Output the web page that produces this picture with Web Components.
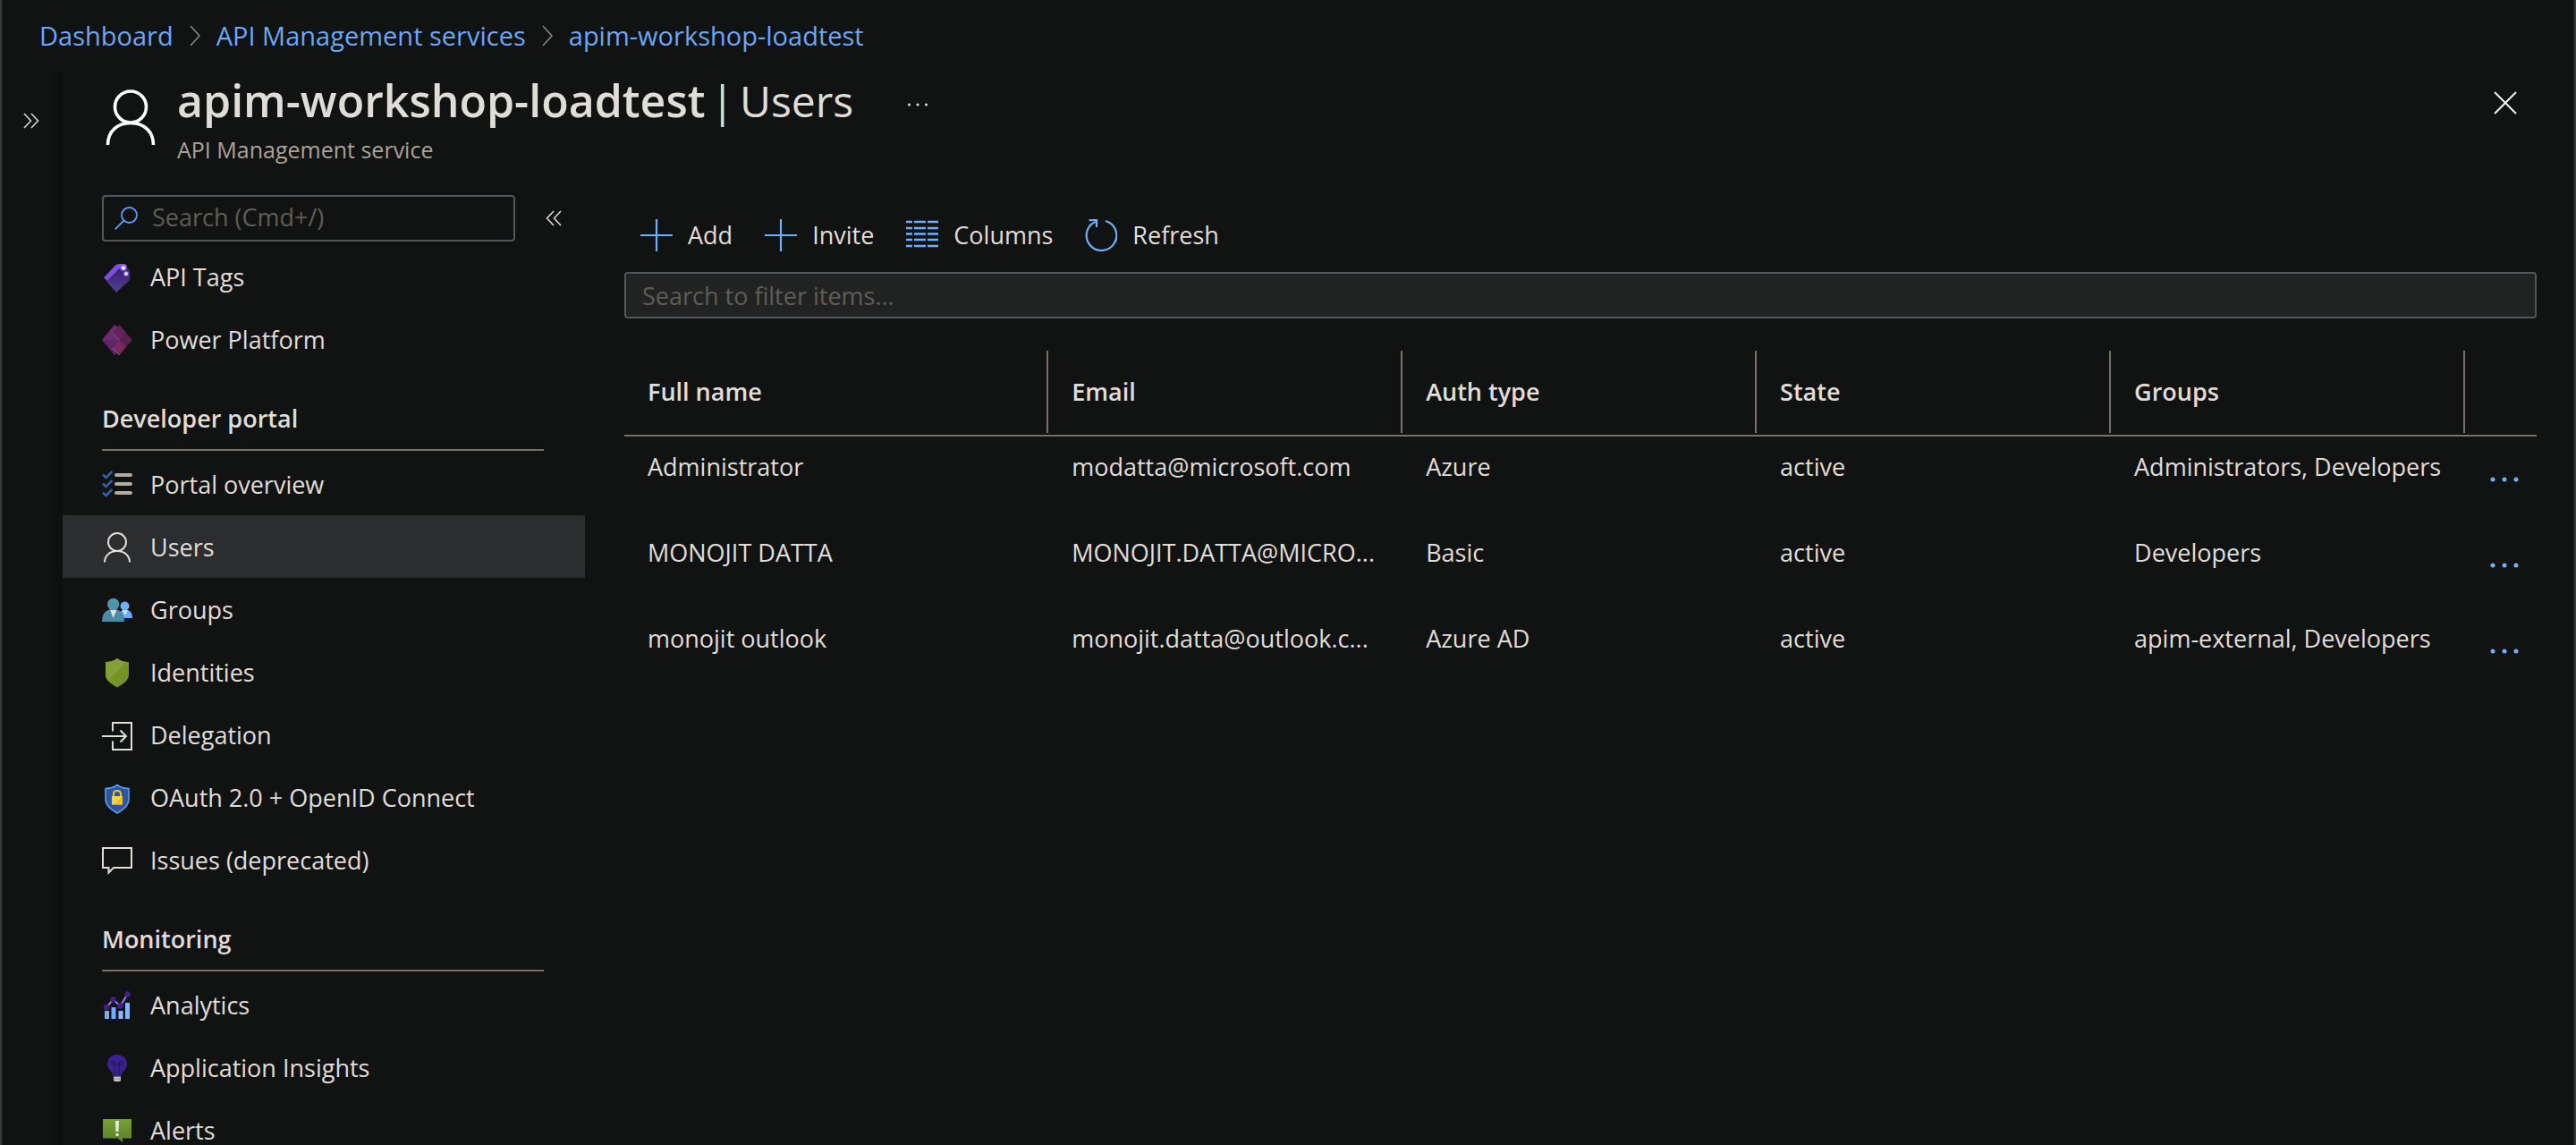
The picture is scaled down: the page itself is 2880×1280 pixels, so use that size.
<!DOCTYPE html>
<html lang="en">
<head>
<meta charset="utf-8">
<title>apim-workshop-loadtest | Users</title>
<style>
  html, body { margin: 0; height: 100%; background: #111312; }
  body {
    --text: #e0ddd9; --muted: #aaa298; --link: #6ba6f8; --accent: #6cb0ff;
    --rule: #7a7064; --field: #54565a; --hint: #605c57; --selected: #2c2d2e;
    font-family: "Open Sans", "Noto Sans", sans-serif;
    font-size: 27px; line-height: 36px; color: var(--text); overflow: hidden;
  }
</style>
</head>
<body>
<portal-shell>
  <bread-crumbs slot="trail"></bread-crumbs>
  <blade-header slot="header" icon="person" name="apim-workshop-loadtest" page="Users" kind="API Management service"></blade-header>
  <side-menu slot="menu">
    <menu-group>
      <menu-entry icon="tags">API Tags</menu-entry>
      <menu-entry icon="power">Power Platform</menu-entry>
    </menu-group>
    <menu-group label="Developer portal">
      <menu-entry icon="checklist">Portal overview</menu-entry>
      <menu-entry icon="person" selected>Users</menu-entry>
      <menu-entry icon="groups">Groups</menu-entry>
      <menu-entry icon="shield">Identities</menu-entry>
      <menu-entry icon="delegate">Delegation</menu-entry>
      <menu-entry icon="lock">OAuth 2.0 + OpenID Connect</menu-entry>
      <menu-entry icon="comment">Issues (deprecated)</menu-entry>
    </menu-group>
    <menu-group label="Monitoring">
      <menu-entry icon="chart">Analytics</menu-entry>
      <menu-entry icon="bulb">Application Insights</menu-entry>
      <menu-entry icon="alert">Alerts</menu-entry>
    </menu-group>
  </side-menu>
  <command-bar>
    <command-button icon="plus">Add</command-button>
    <command-button icon="plus">Invite</command-button>
    <command-button icon="columns">Columns</command-button>
    <command-button icon="refresh">Refresh</command-button>
  </command-bar>
  <filter-box></filter-box>
  <users-table></users-table>
</portal-shell>

<script>
const ICONS = {
  person: ['0 0 34 34', `<g fill="none" stroke="currentColor" stroke-width="2"><circle cx="17" cy="11" r="10"/><path d="M3 33.500C3 26 9 21 17 21S31 26 31 33.500"/></g>`],
  personLarge: ['0 0 56 62', `<g fill="none" stroke="currentColor" stroke-width="3.600"><circle cx="28" cy="19.500" r="17.500"/><path d="M2.500 62C2.500 47 13 37.500 28 37.500S53.500 47 53.500 62"/></g>`],
  tags: ['0 0 34 34', `<defs><linearGradient id="t" x1="0" y1="0" x2="0" y2="1"><stop offset="0" stop-color="#3b1f73"/><stop offset="1" stop-color="#553f97"/></linearGradient></defs><path d="M2 17.500 14.500 4Q16.500 2 19 2H25Q27.500 2 28 5V9L8 23Z" fill="#7b4fe0"/><path d="M5 21.500 18.500 8Q20 7 22 7H29Q31 8 31.500 11V17Q31.500 19 30 21L16 34Z" fill="url(#t)"/><circle cx="24" cy="6.500" r="3.600" fill="#8d6be6"/><circle cx="24" cy="6.500" r="2" fill="#fff"/><circle cx="27" cy="13" r="3" fill="#7659c0"/><circle cx="27" cy="13" r="1.900" fill="#eee6ff"/>`],
  power: ['0 0 34 36', `<path d="M14 1 0 18 14 35 16.500 33 29 18 16.500 3Z" fill="#6b2a72"/><path d="M14 35 0 18 29 18 16.500 33Z" fill="#56235f" opacity=".6"/><path d="M19.500 1 12 10 19 18 27 10Z" fill="#64245a"/><path d="M27 10 34 18 27 26 19 18Z" fill="#58204a"/><path d="M19 18 27 26 19.500 35 12 27Z" fill="#76295f"/><path d="M12 10 19 18" stroke="#8d5688" stroke-width="1"/><path d="M12 27 19.500 35" stroke="#9c6888" stroke-width="1"/>`],
  checklist: ['0 0 34 34', `<g fill="none" stroke="#355fad" stroke-width="2.500"><path d="M1 5.500 4.500 9 11.500 2"/><path d="M1 15.500 4.500 19 11.500 12"/><path d="M1 25.500 4.500 29 11.500 22"/></g><g stroke="#b3aba1" stroke-width="4" stroke-linecap="round"><path d="M16 6H32M16 16H32M16 26H32"/></g>`],
  groups: ['0 0 34 34', `<path d="M19 26C18.500 20 21 16.500 26 16.500S34 20 34 26Z" fill="#6aacfb"/><path d="M22.500 17H29L26 23Z" fill="#d6e4ee"/><circle cx="25.500" cy="12.500" r="5" fill="#6cb0ff"/><path d="M0 30C0 21 4 16 12.500 16S25 21 25 30Q25 30 23 30H2Q0 30 0 30Z" fill="#4c89a4"/><path d="M9 16.500H16.500L12.700 26Z" fill="#dfe3e4"/><circle cx="12.700" cy="10.500" r="6.700" fill="#5191ac"/>`],
  shield: ['0 0 34 34', `<path d="M17 1Q22 5 30 5V19C30 26 23 30 17 33.500 11 30 4 26 4 19V5Q12 5 17 1Z" fill="#749526"/><path d="M17 1Q22 5 27 5L7 26Q4 23 4 19V5Q12 5 17 1Z" fill="#82a037"/>`],
  delegate: ['0 0 34 34', `<g fill="none" stroke="currentColor" stroke-width="2"><path d="M12 12.500V3H33V33H12V23.500"/><path d="M0 18H27M20.500 11.500 27 18 20.500 24.500"/></g>`],
  lock: ['0 0 34 35', `<path d="M17 2.500Q22.500 6.500 30 6.500V18C30 26 23 30.500 17 34 11 30.500 4 26 4 18V6.500Q11.500 6.500 17 2.500Z" fill="#2f55a0" stroke="#5e9be8" stroke-width="1.600"/><path d="M13 16V12.500Q13 9 17 9T21 12.500V16" fill="none" stroke="#f0b93a" stroke-width="2"/><path d="M11 15H23V24.500H11Z" fill="#f7d33f"/><path d="M23 15V24.500H13Z" fill="#f0c033"/>`],
  comment: ['0 0 34 34', `<path d="M1 3H33V25H13L7.500 30.500V25H1Z" fill="none" stroke="currentColor" stroke-width="2"/>`],
  chart: ['0 0 34 34', `<path d="M3 23H8V32H3Z" fill="#7dadeb"/><path d="M10.500 19H15.500V32H10.500Z" fill="#6cb0ff"/><path d="M18.500 23H23.500V32H18.500Z" fill="#8abaf8"/><path d="M26 14H31V32H26Z" fill="#80b9fb"/><path d="M5 19 12.500 10.500 20.500 17.500 28.500 4.500" fill="none" stroke="#9a7ce6" stroke-width="2"/><g fill="#431d92"><circle cx="5" cy="19" r="3.200"/><circle cx="12.500" cy="10.500" r="3.200"/><circle cx="20.500" cy="17.500" r="3.200"/><circle cx="28.500" cy="4.500" r="3.200"/></g>`],
  bulb: ['0 0 34 34', `<path d="M17 2C23.500 2 28 6.500 28 13 28 18 22 21 21.500 26H12.500C12 21 6 18 6 13 6 6.500 10.500 2 17 2Z" fill="#3b2090"/><path d="M14.500 25V13H19.500V25M14.500 13C10 14 9 9.500 12 9.500S14.500 13 14.500 13M19.500 13C24 14 25 9.500 22 9.500S19.500 13 19.500 13" fill="none" stroke="#23184f" stroke-width="1.200"/><path d="M13 26.500H21V31L19.500 32H14.500L13 31Z" fill="#c9c4be"/><path d="M13 29H21" stroke="#97928c" stroke-width="1"/>`],
  alert: ['0 0 34 34', `<defs><linearGradient id="a" x1="0" y1="0" x2="0" y2="1"><stop offset="0" stop-color="#76a033"/><stop offset="1" stop-color="#5b7f2c"/></linearGradient></defs><path d="M1 4H33V25.500H23V30L17.500 25.500H1Z" fill="url(#a)"/><path d="M15 6H19L18.500 18H15.500Z" fill="#e8e8e2"/><path d="M15.500 20H18.500V23H15.500Z" fill="#e8e8e2"/>`],
  plus: ['0 0 36 36', `<path d="M18 0V36M0 18H36" stroke="currentColor" stroke-width="2.200"/>`],
  columns: ['0 0 36 36', `<path d="M0 3H36M0 10H36M0 16.500H36M0 23H36M0 30H36" stroke="currentColor" stroke-width="2.400" stroke-dasharray="7 2 13 2 12 0"/>`],
  refresh: ['0 0 36 36', `<g fill="none" stroke="currentColor" stroke-width="2.200"><path d="M23 2A16.800 16.800 0 1 1 12 2.700"/><path d="M4.500 1H13V9"/></g>`],
  search: ['0 0 26 26', `<g fill="none" stroke="currentColor" stroke-width="1.800"><circle cx="16.500" cy="9.500" r="8.500"/><path d="M10.500 15.500.700 25.300"/></g>`],
  close: ['0 0 26 26', `<path d="M1 1 25 25M25 1 1 25" stroke="currentColor" stroke-width="2"/>`],
  expand: ['0 0 18 18', `<path d="M1 1 8.500 9 1 17M9 1 16.500 9 9 17" fill="none" stroke="currentColor" stroke-width="1.500"/>`],
  collapse: ['0 0 18 18', `<path d="M9 1 1.500 9 9 17M17 1 9.500 9 17 17" fill="none" stroke="currentColor" stroke-width="1.500"/>`],
  chevron: ['0 0 12 24', `<path d="M1 1 11 12 1 23" fill="none" stroke="currentColor" stroke-width="1.400"/>`],
  dots: ['0 0 24 6', `<g fill="currentColor"><circle cx="2.500" cy="3" r="1.600"/><circle cx="12" cy="3" r="1.600"/><circle cx="21.500" cy="3" r="1.600"/></g>`],
  rowDots: ['0 0 32 6', `<g fill="currentColor"><circle cx="3" cy="3" r="2.500"/><circle cx="16" cy="3" r="2.500"/><circle cx="29" cy="3" r="2.500"/></g>`]
};

const RESET = `
  * { box-sizing: border-box; }
  button { font: inherit; color: inherit; background: none; border: 0; padding: 0; margin: 0; cursor: pointer; }
  a { color: inherit; text-decoration: none; }
  input { font: inherit; color: inherit; margin: 0; outline: 0; }
  input::placeholder { color: var(--hint); opacity: 1; }
`;

class BaseElement extends HTMLElement {
  connectedCallback() {
    if (this.shadowRoot) return;
    this.attachShadow({ mode: 'open' }).innerHTML = `<style>${RESET}${this.styles()}</style>${this.markup()}`;
  }
  styles() { return ':host{display:block}'; }
  markup() { return '<slot></slot>'; }
}

customElements.define('svg-icon', class extends BaseElement {
  styles() { return ':host{display:block;flex:none} svg{display:block}'; }
  markup() {
    const [box, art] = ICONS[this.getAttribute('name')];
    const [, , w, h] = box.split(' ');
    return `<svg viewBox="${box}" width="${w}" height="${h}" aria-hidden="true">${art}</svg>`;
  }
});

customElements.define('portal-shell', class extends BaseElement {
  styles() { return `
    :host { display: flex; flex-direction: column; height: 100vh; overflow: hidden;
      border-left: 2px solid #3a3b3b; border-right: 2px solid #3a3b3b; }
    .main { flex: 1; display: flex; min-height: 0; }
    .rail { flex: none; width: 68px; padding: 46px 0 0 24px;
      background: linear-gradient(90deg, transparent 50px, #0d0f0e 68px); }
    .rail button { display: block; }
    .blade { flex: 1; min-width: 0; display: flex; flex-direction: column; }
    .body { flex: 1; display: flex; min-height: 0; }
    .content { flex: 1; min-width: 0; padding: 24px 42px 0 44px; }
  `; }
  markup() { return `
    <slot name="trail"></slot>
    <div class="main">
      <div class="rail"><button aria-label="Expand"><svg-icon name="expand"></svg-icon></button></div>
      <section class="blade">
        <slot name="header"></slot>
        <div class="body"><slot name="menu"></slot><main class="content"><slot></slot></main></div>
      </section>
    </div>`; }
});

customElements.define('bread-crumbs', class extends BaseElement {
  styles() { return `
    :host { display: block; padding: 20px 42px; font-size: 29px; line-height: 40px; color: var(--link); }
    nav { display: flex; align-items: center; gap: 18px; }
    svg-icon { color: #8f8f8f; }
  `; }
  markup() { return `<nav aria-label="Breadcrumb">
    <a href="#">Dashboard</a><svg-icon name="chevron"></svg-icon>
    <a href="#">API Management services</a><svg-icon name="chevron"></svg-icon>
    <a href="#">apim-workshop-loadtest</a></nav>`; }
});

customElements.define('blade-header', class extends BaseElement {
  styles() { return `
    :host { display: flex; height: 138px; padding: 0 64px 0 48px; }
    .art { padding: 20px 24px 0 0; color: #fff; }
    h1 { display: flex; align-items: baseline; gap: 6px; margin: 0; font-size: 50px; line-height: 64px; font-weight: 600; }
    h1 span { font-size: 48px; font-weight: 400; }
    h1 button { align-self: center; padding: 8px 0 0 54px; }
    p { margin: 4px 0 0; font-size: 25px; color: var(--muted); }
    .close { margin: 22px 0 0 auto; align-self: flex-start; color: #f0f0f0; }
  `; }
  markup() {
    const a = n => this.getAttribute(n);
    return `<div class="art"><svg-icon name="${a('icon')}Large"></svg-icon></div>
      <div><h1>${a('name')} <span>|</span> <span>${a('page')}</span><button aria-label="More"><svg-icon name="dots"></svg-icon></button></h1><p>${a('kind')}</p></div>
      <button class="close" aria-label="Close"><svg-icon name="close"></svg-icon></button>`;
  }
});

customElements.define('side-menu', class extends BaseElement {
  styles() { return `
    :host { display: flex; flex-direction: column; flex: none; width: 584px; min-height: 0; }
    .find { display: flex; align-items: center; gap: 34px; padding-left: 44px; }
    label { display: flex; align-items: center; gap: 16px; width: 462px; height: 52px; padding: 0 12px;
      border: 2px solid var(--field); border-radius: 4px; color: #5a9cf5; }
    input { flex: 1; min-width: 0; border: 0; padding: 0 0 2px; background: none; }
    nav { flex: 1; min-height: 0; overflow: hidden; padding-top: 4px; }
  `; }
  markup() { return `
    <div class="find"><label><svg-icon name="search"></svg-icon><input type="text" aria-label="Search menu" placeholder="Search (Cmd+/)"></label>
      <button aria-label="Collapse"><svg-icon name="collapse"></svg-icon></button></div>
    <nav><slot></slot></nav>`; }
});

customElements.define('menu-group', class extends BaseElement {
  styles() { return `
    :host { display: block; }
    h2 { margin: 0 46px 2px 44px; padding: 36px 0 16px; border-bottom: 2px solid var(--rule);
      font-size: 27px; line-height: 36px; font-weight: 600; }
  `; }
  markup() {
    const label = this.getAttribute('label');
    return `${label ? `<h2>${label}</h2>` : ''}<slot></slot>`;
  }
});

customElements.define('menu-entry', class extends BaseElement {
  styles() { return `
    :host { display: block; }
    :host([selected]) { background: var(--selected); }
    a { display: flex; align-items: center; gap: 20px; height: 70px; padding: 2px 0 0 44px; line-height: 28px; white-space: nowrap; }
  `; }
  markup() { return `<a href="#"><svg-icon name="${this.getAttribute('icon')}"></svg-icon><slot></slot></a>`; }
});

customElements.define('command-bar', class extends BaseElement {
  styles() { return ':host { display: flex; gap: 36px; padding-left: 18px; margin-bottom: 20px; }'; }
});

customElements.define('command-button', class extends BaseElement {
  styles() { return `
    :host { display: block; }
    button { display: flex; align-items: center; gap: 17px; height: 42px; }
    svg-icon { color: var(--accent); }
  `; }
  markup() { return `<button><svg-icon name="${this.getAttribute('icon')}"></svg-icon><slot></slot></button>`; }
});

customElements.define('filter-box', class extends BaseElement {
  styles() { return `
    :host { display: block; margin-bottom: 36px; }
    input { display: block; width: 100%; height: 52px; padding: 0 18px; border: 2px solid var(--field); border-radius: 4px; background: #212322; }
  `; }
  markup() { return '<input type="text" aria-label="Filter items" placeholder="Search to filter items...">'; }
});

customElements.define('users-table', class extends BaseElement {
  styles() { return `
    :host { display: block; }
    table { width: 100%; table-layout: fixed; border-collapse: separate; border-spacing: 0; }
    th { padding: 0 0 2px; border-bottom: 2px solid var(--rule); text-align: left; font-weight: 600; }
    th.field { width: 18.52%; }
    th.name { width: auto; }
    th.more { width: 80px; }
    th div { display: flex; align-items: center; height: 92px; padding-left: 26px; border-right: 2px solid var(--rule); }
    td { height: 96px; padding: 16px 0 0 26px; vertical-align: top; white-space: nowrap; }
    td.more { padding: 0 0 0 8px; vertical-align: middle; color: var(--accent); }
    td button { display: block; margin: 0 auto; }
  `; }
  markup() {
    const rows = [
      ['Administrator', 'modatta@microsoft.com', 'Azure', 'active', 'Administrators, Developers'],
      ['MONOJIT DATTA', 'MONOJIT.DATTA@MICRO...', 'Basic', 'active', 'Developers'],
      ['monojit outlook', 'monojit.datta@outlook.c...', 'Azure AD', 'active', 'apim-external, Developers']
    ];
    const heads = ['Full name', 'Email', 'Auth type', 'State', 'Groups'];
    return `<table><thead><tr>${heads.map((h, i) => `<th class="${i ? 'field' : 'name'}"><div>${h}</div></th>`).join('')}<th class="more"></th></tr></thead>
      <tbody>${rows.map(r => `<tr>${r.map(c => `<td>${c}</td>`).join('')}<td class="more"><button aria-label="More actions"><svg-icon name="rowDots"></svg-icon></button></td></tr>`).join('')}</tbody></table>`;
  }
});
</script>
</body>
</html>
